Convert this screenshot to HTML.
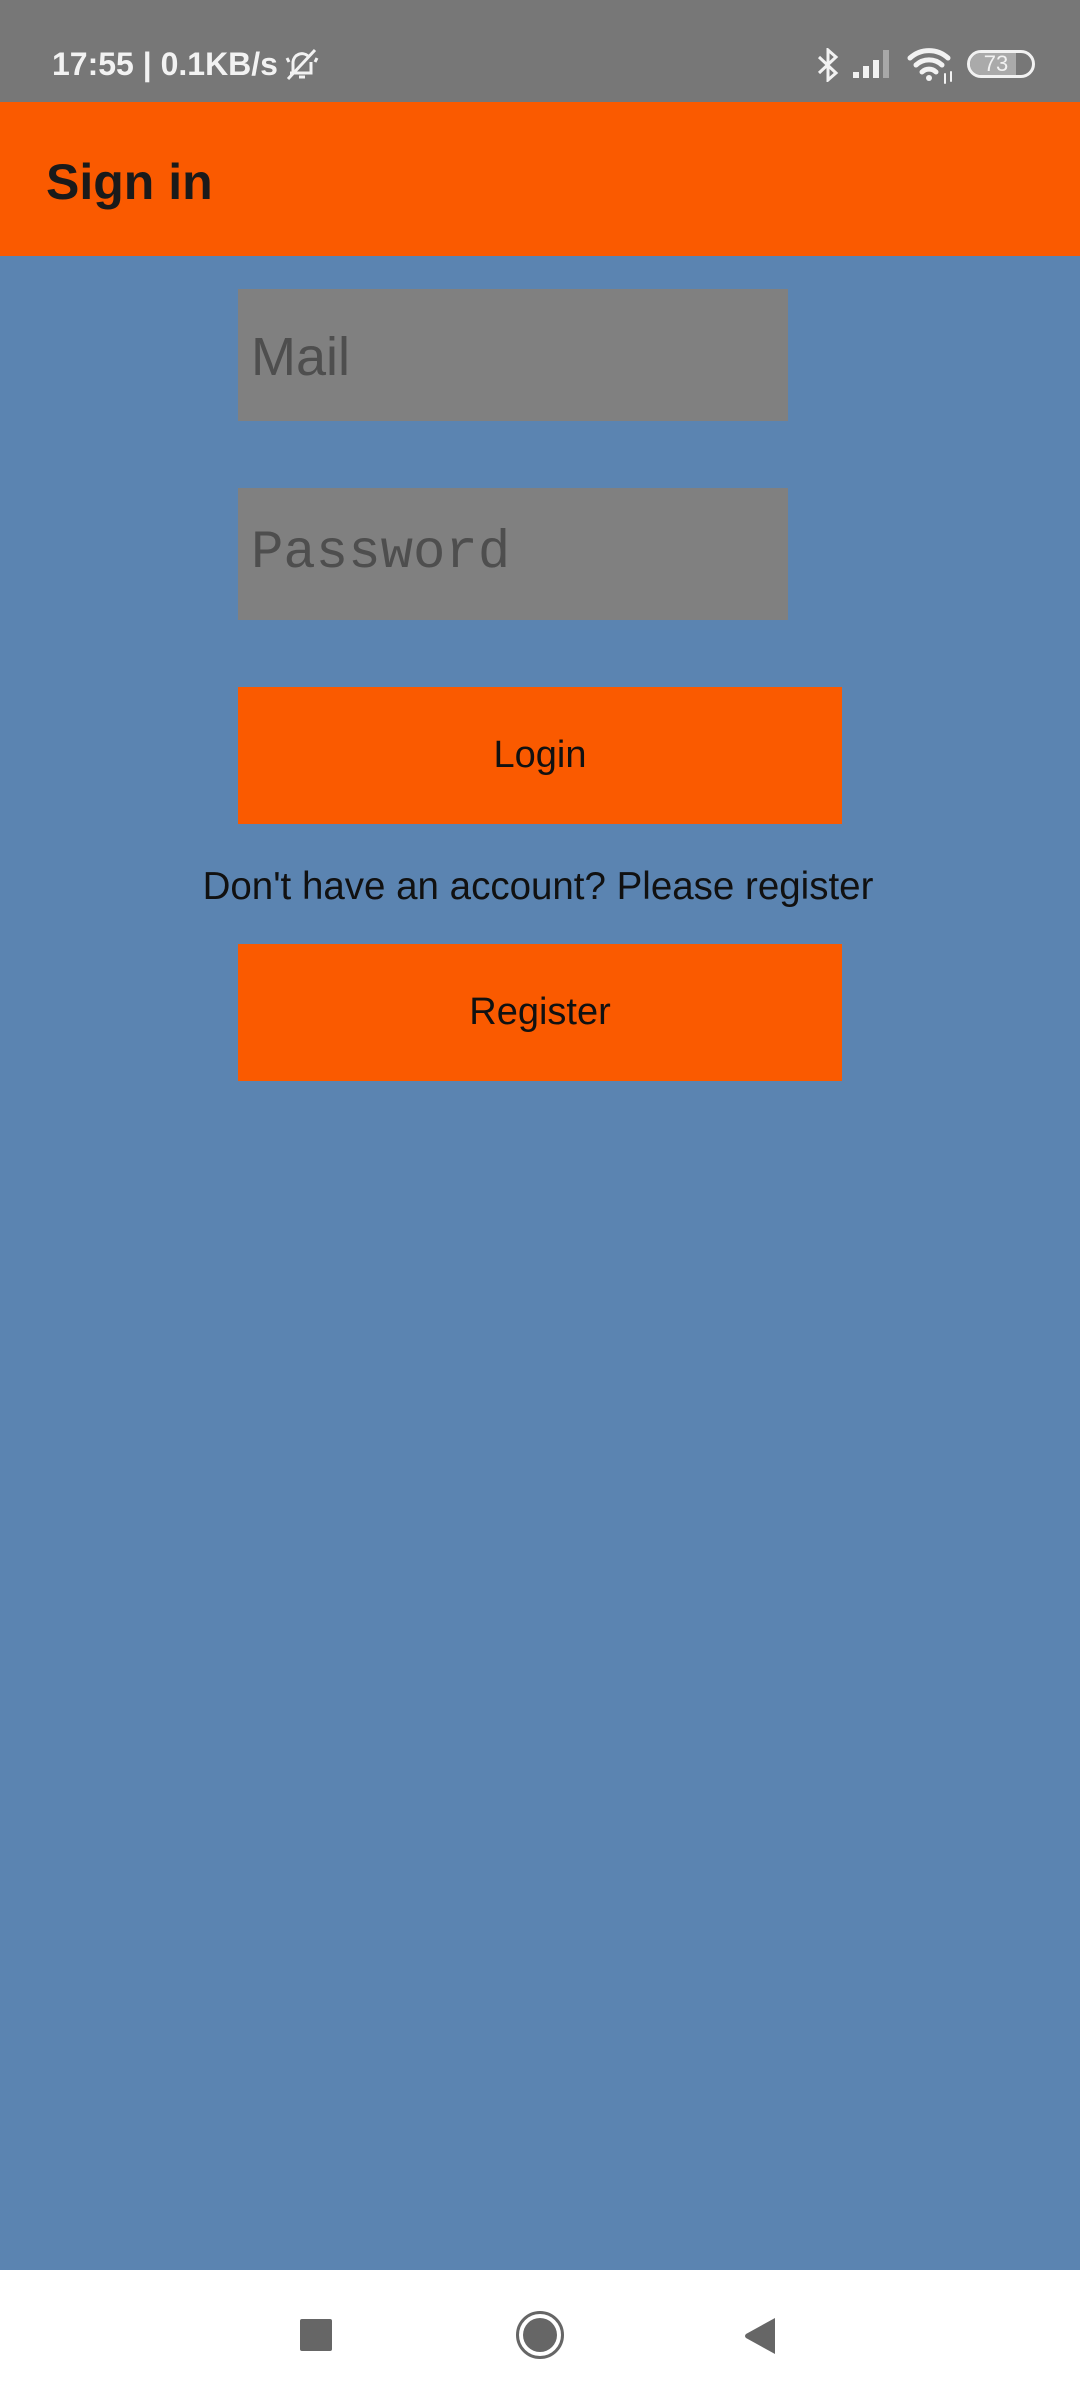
<!DOCTYPE html>
<html><head><meta charset="utf-8"><style>
*{margin:0;padding:0;box-sizing:border-box}
body{width:1080px;height:2400px;background:#5b84b1;position:relative;overflow:hidden;font-family:"Liberation Sans",sans-serif}
.abs{position:absolute}
#status{left:0;top:0;width:1080px;height:102px;background:#777}
#bar{left:0;top:102px;width:1080px;height:154px;background:#fa5a00}
.field{left:238px;width:550px;height:132px;background:#808080}
.btn{left:238px;width:604px;height:137px;background:#fa5a00;display:flex;align-items:center;justify-content:center;font-size:38px;color:#111}
#nav{left:0;top:2270px;width:1080px;height:130px;background:#fff}
</style></head><body>
<div id="status" class="abs">
 <div class="abs" style="left:52px;top:44px;font-size:32px;font-weight:bold;color:#f2f2f2;line-height:40px;white-space:nowrap">17:55 | 0.1KB/s</div>
 <svg class="abs" style="left:284px;top:46px" width="36" height="36" viewBox="0 0 36 36" fill="none" stroke="#f2f2f2" stroke-width="3"><path d="M9 27V16a9 9 0 0 1 15-6M27 16v11H6M15 31h6M4 33L31 4M3 12l2 4M33 12l-2 4"/></svg>
 <svg class="abs" style="left:815px;top:48px" width="26" height="34" viewBox="0 0 26 34" fill="none" stroke="#f2f2f2" stroke-width="3"><path d="M4 9l17 16-8 7V2l8 7L4 25"/></svg>
 <svg class="abs" style="left:853px;top:48px" width="42" height="32" viewBox="0 0 42 32"><rect x="0" y="24" width="6" height="6" fill="#f2f2f2"/><rect x="10" y="18" width="6" height="12" fill="#f2f2f2"/><rect x="20" y="12" width="6" height="18" fill="#f2f2f2"/><rect x="30" y="2" width="6" height="28" fill="#a8a8a8"/></svg>
 <svg class="abs" style="left:906px;top:46px" width="50" height="38" viewBox="0 0 50 38" fill="none" stroke="#f2f2f2" stroke-width="5" stroke-linecap="round"><path d="M4 12a28 28 0 0 1 38 0M10 19a19 19 0 0 1 26 0M16 26a10 10 0 0 1 14 0"/><circle cx="23" cy="32" r="3" fill="#f2f2f2" stroke="none"/><path d="M39 28v9M45 26v9" stroke-width="2"/></svg>
 <div class="abs" style="left:967px;top:50px;width:68px;height:28px;border:3px solid #f2f2f2;border-radius:14px;overflow:hidden">
  <div class="abs" style="left:0;top:0;width:46px;height:22px;background:#aaa"></div>
  <div class="abs" style="left:0;top:0;width:62px;height:22px;font-size:22px;line-height:22px;color:#f2f2f2;text-align:center;padding-right:10px">73</div>
 </div>
</div>
<div id="bar" class="abs"><div class="abs" style="left:46px;top:50px;font-size:50px;font-weight:bold;color:#1a1a1a;line-height:60px">Sign in</div></div>
<div class="abs field" style="top:289px"><div class="abs" style="left:13px;top:38px;font-family:'Liberation Sans',sans-serif;font-size:54px;color:#4e4e4e;line-height:60px">Mail</div></div>
<div class="abs field" style="top:488px"><div class="abs" style="left:13px;top:36px;font-family:'Liberation Mono',monospace;font-size:54px;color:#4e4e4e;line-height:60px">Password</div></div>
<div class="abs btn" style="top:687px">Login</div>
<div class="abs" style="left:0;width:1080px;top:864px;text-align:center;font-size:38.5px;color:#111;line-height:46px;padding-right:4px">Don't have an account? Please register</div>
<div class="abs btn" style="top:944px">Register</div>
<div id="nav" class="abs">
 <div class="abs" style="left:300px;top:49px;width:32px;height:32px;background:#666;border-radius:2px"></div>
 <div class="abs" style="left:516px;top:41px;width:48px;height:48px;border:3px solid #666;border-radius:50%"></div>
 <div class="abs" style="left:523px;top:48px;width:34px;height:34px;background:#666;border-radius:50%"></div>
 <svg class="abs" style="left:743px;top:47px" width="34" height="38" viewBox="0 0 34 38"><path d="M32 1V37L3 21Q1 19 3 17Z" fill="#666"/></svg>
</div>
</body></html>
